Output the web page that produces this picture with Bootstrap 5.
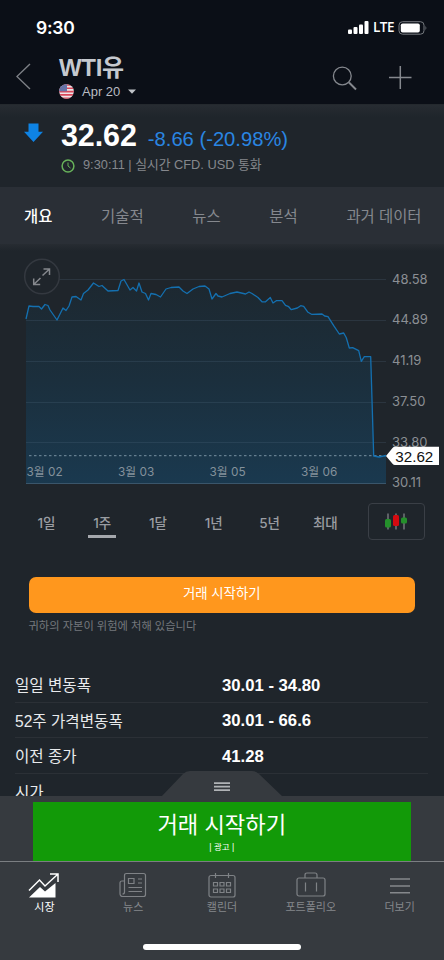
<!DOCTYPE html>
<html lang="ko">
<head>
<meta charset="utf-8">
<meta name="viewport" content="width=device-width, initial-scale=1">
<title>WTI유</title>
<link rel="stylesheet" href="https://cdn.jsdelivr.net/npm/bootstrap@5.3.0/dist/css/bootstrap.min.css">
<style>
body{background:#1f252b;color:#fff;font-family:"Liberation Sans","Noto Sans CJK KR",sans-serif;line-height:1;height:960px;width:444px}
svg{display:block;flex:none}
.top-area{background:#0b0f17;height:104px}
.status{height:54px;padding:1px 16px 0 36px}
.clock{font:600 17.5px/1 Inter,sans-serif;letter-spacing:-.2px}
.lte{font:600 13.5px/1 "Open Sans",sans-serif;letter-spacing:-.5px}
.title-bar{height:50px;padding:0 32px 0 16px}
.title-text{font-size:24px;font-weight:700;color:#c5c9cf;height:27px;letter-spacing:-.3px;padding-top:2px}
.contract{font-size:13px;color:#b9bcc2;height:16px;margin-top:2px}
.quote{height:83px;background:linear-gradient(#272c32,#1f252b 12px);border-top:1px solid #24292e;padding:15px 0 0 24px}
.price{font-size:30.5px;font-weight:700;letter-spacing:-.1px}
.change{font-size:20.2px;color:#2a86e2;margin-left:11px}
.info{font-size:12.8px;color:#85888d}
.tabs{height:57px;background:#2a2f36;color:#85888e;font-size:15.4px;padding:2px 22.5px 0 24px}
.tabs .current{color:#fff;font-weight:500}
.ranges{height:44px;padding-left:18.5px;font-family:Inter,"Noto Sans CJK KR",sans-serif;font-size:13.5px;font-weight:500;color:#9a9da2}
.ranges .rng{width:55.8px;height:36px;text-align:center;padding-top:13px;line-height:14px}
.rng.current:after{content:"";display:block;width:28px;height:2.5px;background:#a5a8ad;margin:5px auto 0}
.candles{width:57px;height:37px;border:1px solid #3a3f46;border-radius:4px;margin-left:14.5px}
.trade{height:36px;background:#ff971d;border-radius:7px;color:#fff;font-size:13.4px;font-weight:400;padding:0 0 3px;line-height:1}
.trade-area{padding:34px 29px 0 28.5px;height:124px}
.risk{font-size:11.25px;color:#74787d;margin-top:8px}
.stats{height:129px;overflow:hidden;padding:0 16px 0 15px;font-size:15.6px}
.stats .line{height:35.5px;border-bottom:1px solid #2b3036;padding-top:4px}
.stats .lbl{width:207px;color:#e8eaec}
.stats .val{font-size:16.7px;font-weight:700}
.sheet{background:#363a3f;height:66px;border-bottom:1px solid #7b7e82;padding:6px 33px 0 32.5px}
.handle{left:161px;top:-25px}
.promo{background:#129a08;height:59px}
.promo-big{font-size:22.2px;line-height:24px;margin-top:12px}
.promo-small{font-size:8.5px;margin-top:5px}
.tabbar{background:#363a3f;height:98px;color:#85888c;font-size:11px}
.tabbar .cell{width:20%;padding-top:10px}
.tabbar .cell svg{margin-bottom:2px}
.home-bar{width:158px;height:6px;border-radius:3px;background:#fff;left:143px;bottom:10px}
</style>
<script src="https://cdn.jsdelivr.net/npm/bootstrap@5.3.0/dist/js/bootstrap.bundle.min.js"></script>
</head>
<body class="overflow-hidden">
<header class="top-area">
  <div class="status d-flex align-items-center justify-content-between">
    <span class="clock">9:30</span>
    <div class="d-flex align-items-center gap-1">
      <svg width="21" height="13" fill="#fff"><rect y="8.500" width="4" height="4.500" rx="1"/><rect x="5.500" y="6" width="4" height="7" rx="1"/><rect x="11" y="3.500" width="4" height="9.500" rx="1"/><rect x="16.500" y="0" width="4" height="13" rx="1"/></svg>
      <span class="lte">LTE</span>
      <svg width="30" height="14"><rect x="1" y=".7" width="25" height="12.500" rx="3.500" fill="none" stroke="#777b80"/><rect x="2.800" y="2.500" width="19" height="9" rx="1.800" fill="#fff"/><path d="M27.500 4.800q1.800 2.200 0 4.400z" fill="#777b80"/></svg>
    </div>
  </div>
  <div class="title-bar d-flex">
    <svg width="43" height="46" fill="none" stroke="#7d8086" stroke-width="1.400"><path d="M14 10 .9 22.500 14 35"/></svg>
    <div class="flex-grow-1">
      <div class="title-text">WTI유</div>
      <div class="contract d-flex align-items-center">
        <svg width="15" height="15"><defs><clipPath id="round"><circle cx="7.500" cy="7.500" r="7.300"/></clipPath></defs><g clip-path="url(#round)"><path fill="#eee4e8" d="M0 0h15v15H0z"/><path stroke="#d8485a" stroke-width="1.600" d="M0 1h15M0 4.300h15M0 7.600h15M0 10.900h15M0 14.200h15"/><path fill="#6673a8" d="M0 0h8v7.200H0z"/></g></svg>
        <span class="ms-2 ps-0">Apr 20</span>
        <svg class="ms-2" width="8" height="5"><path d="M0 .5h8L4 4.700z" fill="#c0c3c8"/></svg>
      </div>
    </div>
    <svg width="80" height="46" fill="none" stroke="#85888e" stroke-width="1.300"><circle cx="10.300" cy="22" r="8.900"/><path d="m17 28.500 7 7" stroke-width="2"/><path d="M57 23.500H79.500M68.300 12v23" stroke-width="1.500"/></svg>
  </div>
</header>

<section class="quote d-flex">
  <svg width="37" height="24"><path d="M4.500 3.500h10v8.200H19L9.500 22 0 11.700h4.500z" fill="#0e83e4"/></svg>
  <div>
    <div class="d-flex align-items-baseline"><span class="price">32.62</span><span class="change">-8.66 (-20.98%)</span></div>
    <div class="info d-flex align-items-center mt-2"><svg width="14" height="14" fill="none" stroke="#67b25a"><circle cx="7" cy="7" r="5.900" stroke-width="1.500"/><path d="M7 3.500V7l2.500 2"/></svg><span class="ms-2">9:30:11 | 실시간 CFD. USD 통화</span></div>
  </div>
</section>

<nav class="tabs d-flex align-items-center justify-content-between">
  <span class="current">개요</span><span>기술적</span><span>뉴스</span><span>분석</span><span>과거 데이터</span>
</nav>

<svg width="444" height="255" viewBox="0 244 444 255">
  <defs><linearGradient id="area" x1="0" y1="0" x2="0" y2="1"><stop offset="0" stop-color="#1d2830"/><stop offset=".5" stop-color="#1b2f3d"/><stop offset="1" stop-color="#1a394f"/></linearGradient>
  <linearGradient id="shade" x1="0" y1="0" x2="0" y2="1"><stop offset="0" stop-color="#272c32"/><stop offset="1" stop-color="#1f252b"/></linearGradient></defs>
  <path d="M0 244h444v7H0z" fill="url(#shade)"/>
  <path d="M33 244l6-4 6 4z" fill="#1f252b"/>
  <path fill="url(#area)" d="M26 319 29 306 33 306.500 39 306.500 41.500 309 45 304.500 48 305.500 50 310 57 320 63 308 66 310.500 69 306 72 297 76 296.500 81 300 83.500 293.500 88 290 93.500 283 99 286.500 102 285.500 108 291 118 290.500 121 281 124 279.500 130 290 133 287.500 136.500 291 139 283 142 292 145.500 293.500 148.500 300 151 293.500 156 294.500 160.500 297 166 289 171 287.500 179 287 183 291 187 293.500 193 289 199 286.500 205 286 209 289 212 299 216 293.500 218 296 222 297 230 293.500 237 292 245.500 294 249 292 252 293.500 258 297.500 262 301.800 265.500 301.800 270.300 297.500 273 303 276.300 300.700 282 300.700 285.500 305.300 288.700 306.700 291.300 309.700 297.300 308 300.700 305.700 303.700 306.300 308 312.300 311.500 314.300 322 314 324.700 316 328 316.700 333.700 325.700 339.300 334 343.700 333 346.300 337.700 349.300 348 352.700 347.700 358.700 350.700 361.300 361.300 364.300 356.700 370.700 356.700 373.700 456 379 457 386 455.500V484H26z"/>
  <path d="M59 279.500H386M26 320.500H386M26 361.500H386M26 402.500H386M26 442.500H386" stroke="#55708a" stroke-opacity=".22"/>
  <path d="M26 483.500H386" stroke="#3a566b"/>
  <path d="M29 455.700H386" stroke="#7890a0" stroke-dasharray="2.500 2.500"/>
  <path fill="none" stroke="#1470b0" stroke-width="1.300" stroke-linejoin="round" d="M26 319 29 306 33 306.500 39 306.500 41.500 309 45 304.500 48 305.500 50 310 57 320 63 308 66 310.500 69 306 72 297 76 296.500 81 300 83.500 293.500 88 290 93.500 283 99 286.500 102 285.500 108 291 118 290.500 121 281 124 279.500 130 290 133 287.500 136.500 291 139 283 142 292 145.500 293.500 148.500 300 151 293.500 156 294.500 160.500 297 166 289 171 287.500 179 287 183 291 187 293.500 193 289 199 286.500 205 286 209 289 212 299 216 293.500 218 296 222 297 230 293.500 237 292 245.500 294 249 292 252 293.500 258 297.500 262 301.800 265.500 301.800 270.300 297.500 273 303 276.300 300.700 282 300.700 285.500 305.300 288.700 306.700 291.300 309.700 297.300 308 300.700 305.700 303.700 306.300 308 312.300 311.500 314.300 322 314 324.700 316 328 316.700 333.700 325.700 339.300 334 343.700 333 346.300 337.700 349.300 348 352.700 347.700 358.700 350.700 361.300 361.300 364.300 356.700 370.700 356.700 373.700 456 379 457 386 455.500"/>
  <circle cx="42" cy="276.500" r="17.300" fill="#1f252b" stroke="#343940" stroke-width="1.500"/>
  <path d="M42.500 275.500 49.500 269M43.500 269h6v6M40.500 278 33.700 284.500M33.700 278.500v6h6.500" fill="none" stroke="#85888d" stroke-width="1.500"/>
  <g font-family="Inter, sans-serif" font-size="13" fill="#8b8f94"><text x="392" y="283.500">48.58</text><text x="392" y="324.300">44.89</text><text x="392" y="365">41.19</text><text x="392" y="405.800">37.50</text><text x="392" y="446.500">33.80</text><text x="392" y="487.200">30.11</text></g>
  <g font-family="Inter, 'Noto Sans CJK KR', sans-serif" font-size="11.800" fill="#84919b"><text x="26.500" y="476">3월 02</text><text x="118" y="476">3월 03</text><text x="209.500" y="476">3월 05</text><text x="301" y="476">3월 06</text></g>
  <path d="M386 456l6.500-8q1-1.300 2.500-1.300h44v18.300h-44q-1.500 0-2.500-1.300z" fill="#fff"/>
  <text x="395.300" y="461.500" font-family="Liberation Sans, sans-serif" font-size="15.200" fill="#111">32.62</text>
</svg>

<div class="ranges d-flex align-items-center">
  <span class="rng">1일</span><span class="rng current">1주</span><span class="rng">1달</span><span class="rng">1년</span><span class="rng">5년</span><span class="rng">최대</span>
  <div class="candles d-flex align-items-center justify-content-center"><svg width="22" height="17"><path d="M3 .5v16M11 .5v16M19 .5v16" stroke="#888b8e" stroke-width="1.200"/><rect x="0" y="6" width="6" height="8.500" rx="1.500" fill="#24902b"/><rect x="8" y="2" width="6" height="11" rx="1.500" fill="#d40b10"/><rect x="16" y="4.500" width="6" height="6" rx="1.500" fill="#24902b"/></svg></div>
</div>

<div class="trade-area">
  <button class="btn trade w-100 border-0 d-flex align-items-center justify-content-center">거래 시작하기</button>
  <div class="risk">귀하의 자본이 위험에 처해 있습니다</div>
</div>

<section class="stats">
  <div class="line d-flex align-items-center"><span class="lbl">일일 변동폭</span><span class="val">30.01 - 34.80</span></div>
  <div class="line d-flex align-items-center"><span class="lbl">52주 가격변동폭</span><span class="val">30.01 - 66.6</span></div>
  <div class="line d-flex align-items-center"><span class="lbl">이전 종가</span><span class="val">41.28</span></div>
  <div class="line d-flex align-items-center"><span class="lbl">시가</span></div>
</section>

<section class="sheet position-relative">
  <svg class="handle position-absolute" width="122" height="26"><path d="M0 26 22 3q3-3 7-3h62q4 0 7 3l24 23z" fill="#363a3f"/><path d="M53 12.200h16M53 15.700h16M53 19.200h16" stroke="#b0b3b6" stroke-width="1.800"/></svg>
  <div class="promo text-center overflow-hidden"><div class="promo-big">거래 시작하기</div><div class="promo-small">| 광고 |</div></div>
</section>

<nav class="tabbar position-relative">
  <div class="d-flex">
    <div class="cell d-flex flex-column align-items-center text-white"><svg width="32" height="28"><path d="M1 25.500 12 15l5 4.500L27.500 11v14.500z" fill="#fff"/><path d="M1 18.500 11.500 8l5.500 6L29.500 2.500M22 2h8v8" fill="none" stroke="#fff" stroke-width="1.500"/></svg>시장</div>
    <div class="cell d-flex flex-column align-items-center"><svg width="28" height="28" fill="none" stroke="#7f8286" stroke-width="1.200"><path d="M5.500 20V3.500q0-2 2-2h17q2 0 2 2v19q0 2-2 2H4q-3 0-3-3V11q0-2 2-2h2.500M5.500 20q0 2-2 2M9.500 6.500H15v5H9.500zM19 7h4M19 11h4M9.500 15.500H23M9.500 19.500H23"/></svg>뉴스</div>
    <div class="cell d-flex flex-column align-items-center"><svg width="28" height="28" fill="none" stroke="#7f8286" stroke-width="1.200"><rect x="1" y="3.500" width="26" height="21.500" rx="2"/><path d="M7.500 1v5M20.500 1v5M5.500 10.500h4v3.500h-4zM12 10.500h4v3.500h-4zM18.500 10.500h4v3.500h-4zM5.500 17h4v3.500h-4zM12 17h4v3.500h-4zM18.500 17h4v3.500h-4z"/></svg>캘린더</div>
    <div class="cell d-flex flex-column align-items-center"><svg width="30" height="28" fill="none" stroke="#7f8286" stroke-width="1.200"><rect x="1" y="6" width="28" height="18" rx="2"/><path d="M9 6V3q0-2 2-2h8q2 0 2 2v3M9.500 10.500v9M20.500 10.500v9"/></svg>포트폴리오</div>
    <div class="cell d-flex flex-column align-items-center"><svg width="22" height="28" stroke="#85888c" stroke-width="1.500"><path d="M1 7h20M1 13.900h20M1 20.800h20"/></svg>더보기</div>
  </div>
  <div class="home-bar position-absolute"></div>
</nav>
</body>
</html>
